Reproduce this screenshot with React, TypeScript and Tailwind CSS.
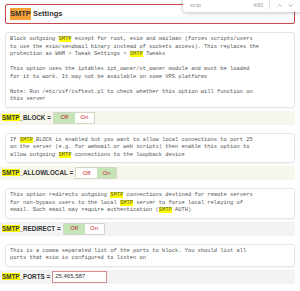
import { ChevronDown, ChevronUp } from 'lucide-react';

type Toggle = 'off' | 'on';

function Mark({ children }: { children: string }) {
  return <span className="bg-[#ffff00]">{children}</span>;
}

function Desc({ children }: { children: React.ReactNode }) {
  return (
    <div className="mx-[5px] rounded-[3px] border border-[#e3e3e3] px-[4px] py-[3px] font-['Liberation_Mono',monospace] text-[5.4px] leading-[7.5px] text-[#555] shadow-[0_1px_1px_rgba(0,0,0,0.04)]">
      {children}
    </div>
  );
}

function Row({ name, children, tint }: { name: string; children: React.ReactNode; tint?: boolean }) {
  return (
    <div
      className={`mt-[3px] mr-[5px] mb-[8px] flex h-[14px] items-center gap-[2px] pl-[2px] font-['Liberation_Sans',Arial,sans-serif] text-[6.3px] font-bold text-[#333] ${
        tint ? 'bg-[#f6f6ec]' : 'bg-[#f3f3f3]'
      }`}
    >
      <span>
        <Mark>SMTP</Mark>
        {name} =
      </span>
      {children}
    </div>
  );
}

function OffOn({ value }: { value: Toggle }) {
  return (
    <div className="flex h-[12px] border border-[#d6d6c8] text-[6px] font-normal">
      <span
        className={`flex w-[21px] items-center justify-center text-[#c62828] ${
          value === 'off' ? 'bg-[#c5e4b8]' : 'bg-white'
        }`}
      >
        Off
      </span>
      <span
        className={`flex w-[19px] items-center justify-center text-[#c62828] ${
          value === 'on' ? 'bg-[#c5e4b8]' : 'bg-white'
        }`}
      >
        On
      </span>
    </div>
  );
}

export default function App() {
  return (
    <div className="relative h-[291px] w-[300px] overflow-hidden bg-white">
      <div className="mx-[5px] mt-[4px] mb-[8px] flex h-[20px] items-center rounded-[2px] border border-[#c9474a] pl-[4px] font-['Liberation_Sans',Arial,sans-serif] text-[7.5px] font-bold text-[#333]">
        <span className="bg-[#f7a035]">SMTP</span>&nbsp;Settings
      </div>

      <Desc>
        <p>
          Block outgoing <Mark>SMTP</Mark> except for root, exim and mailman (forces scripts/users
        </p>
        <p>to use the exim/sendmail binary instead of sockets access). This replaces the</p>
        <p>
          protection as WHM &gt; Tweak Settings &gt; <Mark>SMTP</Mark> Tweaks
        </p>
        <p>&nbsp;</p>
        <p>This option uses the iptables ipt_owner/xt_owner module and must be loaded</p>
        <p>for it to work. It may not be available on some VPS platforms</p>
        <p>&nbsp;</p>
        <p>Note: Run /etc/csf/csftest.pl to check whether this option will function on</p>
        <p>this server</p>
      </Desc>
      <Row name="_BLOCK" tint>
        <OffOn value="off" />
      </Row>

      <Desc>
        <p>
          If <Mark>SMTP</Mark>_BLOCK is enabled but you want to allow local connections to port 25
        </p>
        <p>on the server (e.g. for webmail or web scripts) then enable this option to</p>
        <p>
          allow outgoing <Mark>SMTP</Mark> connections to the loopback device
        </p>
      </Desc>
      <Row name="_ALLOWLOCAL" tint>
        <OffOn value="on" />
      </Row>

      <Desc>
        <p>
          This option redirects outgoing <Mark>SMTP</Mark> connections destined for remote servers
        </p>
        <p>
          for non-bypass users to the local <Mark>SMTP</Mark> server to force local relaying of
        </p>
        <p>
          email. Such email may require authentication (<Mark>SMTP</Mark> AUTH)
        </p>
      </Desc>
      <Row name="_REDIRECT">
        <OffOn value="off" />
      </Row>

      <Desc>
        <p>This is a comma separated list of the ports to block. You should list all</p>
        <p>ports that exim is configured to listen on</p>
      </Desc>
      <Row name="_PORTS">
        <div className="flex h-[12px] w-[55px] items-center border border-[#d98c8c] bg-white px-[2px] text-[6px] font-normal text-[#333]">
          25,465,587
        </div>
      </Row>

      <Desc>
        <p>&nbsp;</p>
      </Desc>

      <div className="absolute top-[-8px] left-[183px] flex h-[20px] w-[120px] items-end rounded-[3px] bg-white pb-[3px] pl-[7px] font-['Liberation_Sans',Arial,sans-serif] text-[5px] text-[#999] shadow-[0_1px_4px_rgba(0,0,0,0.25)]">
        <span>smtp</span>
        <span className="ml-auto">4/60</span>
        <span className="mx-[6px] h-[8px] w-px bg-[#ddd]" />
        <ChevronUp size={7} className="text-[#777]" />
        <ChevronDown size={7} className="mr-[9px] ml-[4px] text-[#777]" />
      </div>
    </div>
  );
}
